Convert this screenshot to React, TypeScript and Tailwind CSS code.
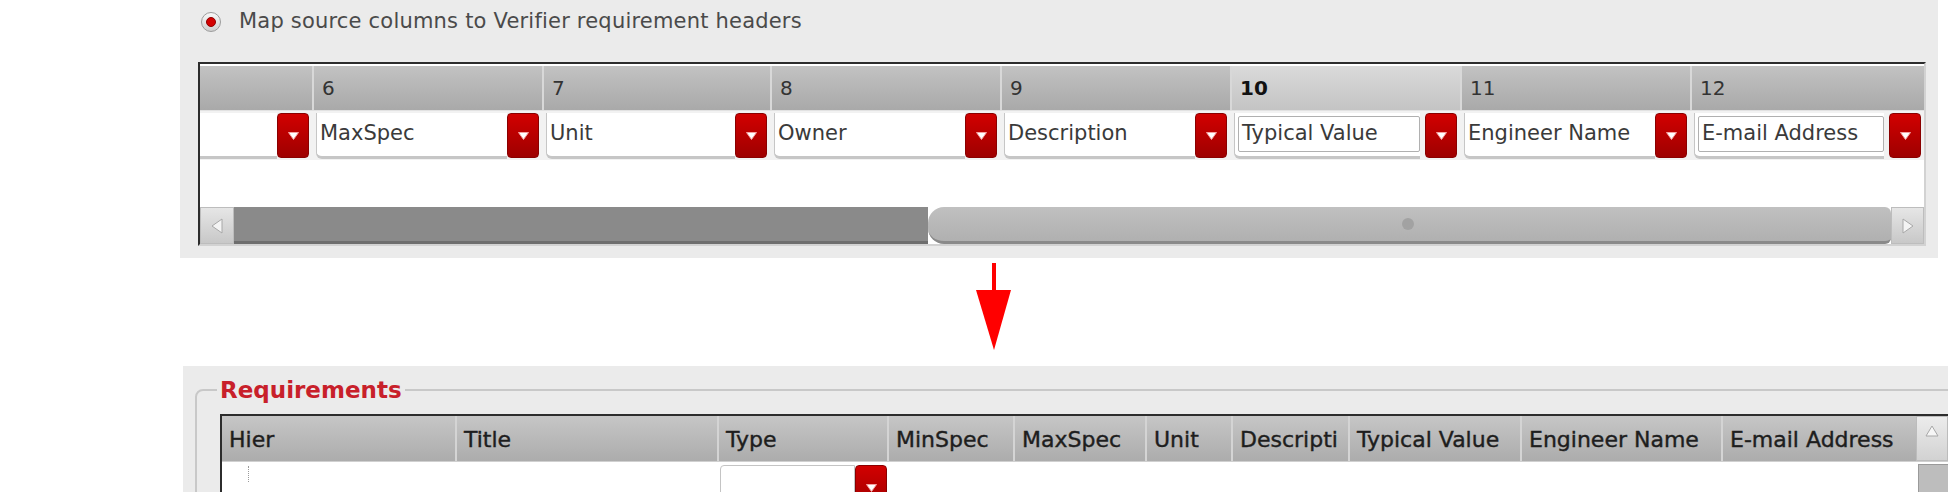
import React from "react";

const FONT = "font-['DejaVu_Sans',sans-serif]";

const topCols = [
  { n: "", label: "", w: "w-[112px]", first: true },
  { n: "6", label: "MaxSpec", w: "w-[230px]" },
  { n: "7", label: "Unit", w: "w-[228px]" },
  { n: "8", label: "Owner", w: "w-[230px]" },
  { n: "9", label: "Description", w: "w-[230px]" },
  { n: "10", label: "Typical Value", w: "w-[230px]", active: true, boxed: true },
  { n: "11", label: "Engineer Name", w: "w-[230px]" },
  { n: "12", label: "E-mail Address", w: "flex-1", boxed: true },
];

// "Descripti" is cut by its column in the original grid
const reqCols = [
  { label: "Hier", w: "w-[233px]" },
  { label: "Title", w: "w-[262px]" },
  { label: "Type", w: "w-[170px]" },
  { label: "MinSpec", w: "w-[126px]" },
  { label: "MaxSpec", w: "w-[132px]" },
  { label: "Unit", w: "w-[86px]" },
  { label: "Descripti", w: "w-[117px]" },
  { label: "Typical Value", w: "w-[172px]" },
  { label: "Engineer Name", w: "w-[201px]" },
  { label: "E-mail Address", w: "w-[195px]" },
];

function DropButton() {
  return (
    <div className="w-[32px] h-[45px] shrink-0 rounded-[4px] bg-linear-to-b from-[#d20000] to-[#9e0000] border border-[#8a0000] flex items-center justify-center">
      <svg width="11" height="8" viewBox="0 0 11 8">
        <polygon points="0.5,0.5 10.5,0.5 5.5,7.5" fill="#ffffff" stroke="#f4a0a0" strokeWidth="1" />
      </svg>
    </div>
  );
}

function TopCombo({ label, boxed, first }: { label: string; boxed?: boolean; first?: boolean }) {
  return (
    <div className={`h-full flex items-center ${first ? "pl-0" : "pl-[4px]"} pr-[3px]`}>
      {boxed ? (
        <div className="flex-1 h-[46px] mr-[5px] flex items-center bg-white border-b-[3px] border-l border-[#c6c6c6] rounded-bl-[6px]">
          <div className="flex-1 h-[36px] ml-[3px] flex items-center pl-[3px] border border-[#b0b0b0] rounded-[2px] text-[21px] text-[#3a3a3a] whitespace-nowrap overflow-hidden">
            {label}
          </div>
        </div>
      ) : (
        <div className={`flex-1 h-[46px] flex items-center pl-[3px] bg-white border-b-[3px] border-[#c6c6c6] ${first ? "" : "border-l rounded-bl-[6px]"} text-[21px] text-[#3a3a3a] whitespace-nowrap overflow-hidden`}>
          {label}
        </div>
      )}
      <DropButton />
    </div>
  );
}

export default function App() {
  return (
    <div className={`w-[1948px] h-[492px] bg-white overflow-hidden flex flex-col ${FONT}`}>
      {/* Source mapping panel */}
      <div className="ml-[180px] w-[1758px] h-[258px] shrink-0 bg-[#ebebeb] flex flex-col">
        <div className="h-[44px] flex items-center pl-[21px]">
          <div className="w-[20px] h-[20px] rounded-full border border-[#9c9c9c] bg-linear-to-b from-[#f8f8f8] to-[#cfcfcf] flex items-center justify-center">
            <div className="w-[10px] h-[10px] rounded-full bg-[#d40000] border border-[#8e0000]" />
          </div>
          <span className="ml-[18px] text-[21px] tracking-[0.2px] text-[#4a4a4a]">Map source columns to Verifier requirement headers</span>
        </div>

        <div className="ml-[18px] mt-[18px] w-[1728px] h-[184px] border-2 border-t-[#2c2c2c] border-l-[#2c2c2c] border-r-[#d2d2d2] border-b-[#d2d2d2] bg-white flex flex-col">
          {/* column numbers */}
          <div className="mt-[2px] h-[44px] flex">
            {topCols.map((c, i) => (
              <div
                key={i}
                className={`${c.w} h-full flex items-center pl-[8px] text-[20px] ${
                  c.first ? "" : "border-l-2 border-l-[#d8d8d8]"
                } ${
                  c.active
                    ? "bg-linear-to-b from-[#dadada] to-[#c4c4c4] text-[#111] font-bold"
                    : "bg-linear-to-b from-[#c2c2c2] to-[#a9a9a9] text-[#333]"
                }`}
              >
                {c.n}
              </div>
            ))}
          </div>

          {/* header combos */}
          <div className="h-[50px] flex bg-[#f2f2f2] border-t border-[#e2e2e2]">
            {topCols.map((c, i) => (
              <div key={i} className={`${c.w} h-full`}>
                <TopCombo label={c.label} boxed={c.boxed} first={c.first} />
              </div>
            ))}
          </div>

          <div className="flex-1 bg-white" />

          {/* horizontal scrollbar */}
          <div className="h-[37px] flex">
            <div className="w-[34px] h-full bg-linear-to-b from-[#e6e6e6] to-[#c8c8c8] border border-[#bdbdbd] flex items-center justify-center">
              <svg width="12" height="16" viewBox="0 0 12 16">
                <polygon points="11,1 11,15 1,8" fill="#f4f4f4" stroke="#a8a8a8" strokeWidth="1" />
              </svg>
            </div>
            <div className="w-[694px] h-full bg-[#8a8a8a] border-b-[3px] border-[#6e6e6e]" />
            <div className="flex-1 h-full bg-linear-to-b from-[#c0c0c0] to-[#b0b0b0] border-b-[3px] border-[#8a8a8a] rounded-l-[16px] rounded-r-[6px] flex items-center">
              <div className="ml-[474px] w-[12px] h-[12px] rounded-full bg-[#a2a2a2]" />
            </div>
            <div className="w-[33px] h-full bg-linear-to-b from-[#e6e6e6] to-[#c8c8c8] border border-[#bdbdbd] flex items-center justify-center">
              <svg width="12" height="16" viewBox="0 0 12 16">
                <polygon points="1,1 1,15 11,8" fill="#f4f4f4" stroke="#a8a8a8" strokeWidth="1" />
              </svg>
            </div>
          </div>
        </div>
      </div>

      {/* arrow */}
      <div className="h-[108px] shrink-0 pl-[976px] pt-[5px]">
        <svg width="36" height="88" viewBox="0 0 36 88">
          <rect x="16" y="0" width="4" height="28" fill="#ff0000" />
          <polygon points="0,27 35,27 18,87" fill="#ff0000" />
        </svg>
      </div>

      {/* Requirements panel */}
      <div className="ml-[183px] flex-1 bg-[#ebebeb] overflow-hidden">
        <fieldset className="ml-[12px] mt-[9px] w-[1800px] h-[200px] border-2 border-[#c8c8c8] rounded-[8px]">
          <legend className="ml-[20px] px-[3px] text-[23px] leading-[30px] font-bold text-[#c8202a]">Requirements</legend>
          <div className="ml-[23px] mt-[9px] w-[1730px] h-[150px] border-t-2 border-l-2 border-[#2c2c2c] bg-white flex flex-col">
            <div className="h-[46px] flex border-b border-[#d0d0d0]">
              {reqCols.map((c, i) => (
                <div
                  key={i}
                  className={`${c.w} h-full shrink-0 flex items-center pl-[7px] pt-[2px] overflow-hidden whitespace-nowrap text-[22px] text-[#1e1e1e] [-webkit-text-stroke:0.4px_#1e1e1e] bg-linear-to-b from-[#c6c6c6] to-[#acacac] ${
                    i === 0 ? "" : "border-l-2 border-l-[#d4d4d4]"
                  }`}
                >
                  {c.label}
                </div>
              ))}
              <div className="w-[32px] h-full shrink-0 bg-linear-to-b from-[#ececec] to-[#d2d2d2] border border-[#bcbcbc] flex items-start justify-center pt-[8px]">
                <svg width="14" height="12" viewBox="0 0 14 12">
                  <polygon points="1,11 13,11 7,1" fill="#f6f6f6" stroke="#a8a8a8" strokeWidth="1" />
                </svg>
              </div>
            </div>
            <div className="flex-1 flex">
              <div className="w-[233px] shrink-0 pl-[26px] pt-[4px]">
                <div className="w-0 h-[16px] border-l border-dotted border-[#9a9a9a]" />
              </div>
              <div className="w-[262px] shrink-0" />
              <div className="w-[170px] shrink-0 pt-[3px] pl-[3px] flex">
                <div className="flex-1 h-[44px] bg-white border border-[#c4c4c4] rounded-l-[4px]" />
                <DropButton />
              </div>
              <div className="flex-1" />
              <div className="w-[32px] shrink-0 pt-[2px]">
                <div className="w-full h-[60px] bg-[#bdbdbd] border border-[#9a9a9a]" />
              </div>
            </div>
          </div>
        </fieldset>
      </div>
    </div>
  );
}
